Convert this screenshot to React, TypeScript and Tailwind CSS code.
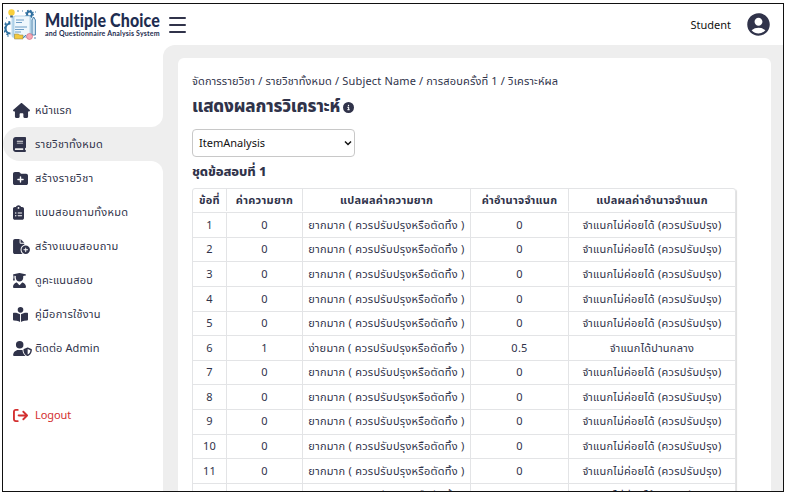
import React from "react";
import {
  FaHouse, FaBook, FaFolderPlus, FaClipboardList, FaFileCirclePlus, FaUserGraduate,
  FaBookOpenReader, FaUserShield, FaArrowRightFromBracket, FaCircleInfo,
} from "react-icons/fa6";
import { MdAccountCircle } from "react-icons/md";
import type { IconType } from "react-icons";

type Item = { icon: IconType; label: string; text: string; size: string };

const below: Item[] = [
  { icon: FaFolderPlus, label: "สร้างรายวิชา", text: "tracking-[0.42px]", size: "size-[15px]" },
  { icon: FaClipboardList, label: "แบบสอบถามทั้งหมด", text: "tracking-[0.3px]", size: "w-[11px] h-[15px]" },
  { icon: FaFileCirclePlus, label: "สร้างแบบสอบถาม", text: "tracking-[0.4px]", size: "w-[17px] h-[15px]" },
  { icon: FaUserGraduate, label: "ดูคะแนนสอบ", text: "tracking-[0.22px]", size: "w-[13px] h-[15px]" },
  { icon: FaBookOpenReader, label: "คู่มือการใช้งาน", text: "tracking-[0.3px]", size: "size-[15px]" },
  { icon: FaUserShield, label: "ติดต่อ Admin", text: "tracking-[0.1px]", size: "w-[19px] h-[15px]" },
];

function MenuItem({ icon: Icon, label, text, size }: Item) {
  return (
    <div className="flex h-[34px] items-center pl-[10px]">
      <span className="flex w-[22px] shrink-0">
        <Icon className={`${size} shrink-0 text-[#30334a]`} />
      </span>
      <span className={`whitespace-nowrap ${text}`}>{label}</span>
    </div>
  );
}

function Logo() {
  return (
    <svg viewBox="0 0 34 34" className="size-[34px] shrink-0" fill="none">
      <path d="M6.500 15.500a5 5 0 000 10" stroke="#2f6f9f" strokeWidth="2.200" />
      <path d="M6.200 14a6.500 6.500 0 000 13" stroke="#2f6f9f" strokeWidth="1.800" strokeDasharray="2 2" />
      <circle cx="25.500" cy="6" r="2.500" stroke="#2f6f9f" strokeWidth="2" />
      <circle cx="25.500" cy="6" r="3.800" stroke="#2f6f9f" strokeWidth="1.200" strokeDasharray="1.500 1.500" />
      <rect x="7.500" y="8" width="20" height="22" rx="3" fill="#b9d7ec" />
      <rect x="10" y="8" width="16" height="20" rx="1" fill="#eff7fc" stroke="#9cc4e0" strokeWidth=".7" />
      <path d="M12 12h8M12 14.500h6M11 19h12M11 21.500h9M11 24h6" stroke="#6c9cc4" strokeWidth="1" />
      <path d="M28 12l1.700-3 1.700 3v15H28z" fill="#d7e9f5" stroke="#3a77a5" strokeWidth=".9" />
      <circle cx="7.500" cy="4.500" r="3.200" fill="#f8cf3c" />
      <path d="M6.200 7.500h2.600v2H6.200z" fill="#38618a" />
      <path d="M10.500 26h4l1 1h3.500v4h-8.500z" fill="#f3c93f" stroke="#8a7840" strokeWidth=".5" />
      <circle cx="25.500" cy="28.500" r="3" fill="#f4a9b5" stroke="#cf6279" strokeWidth=".6" />
      <path d="M19 30l3-3M2 10h1M13 3h2M31 4h1M3 28h2M30 30h2M1 15h1M18 3h1" stroke="#4c86b0" strokeWidth="1" />
    </svg>
  );
}

const low = ["0", "ยากมาก ( ควรปรับปรุงหรือตัดทิ้ง )", "0", "จำแนกไม่ค่อยได้ (ควรปรับปรุง)"];
const mid = ["1", "ง่ายมาก ( ควรปรับปรุงหรือตัดทิ้ง )", "0.5", "จำแนกได้ปานกลาง"];
const rows = Array.from({ length: 12 }, (_, i) => [String(i + 1), ...(i === 5 ? mid : low)]);
const heads = ["ข้อที่", "ค่าความยาก", "แปลผลค่าความยาก", "ค่าอำนาจจำแนก", "แปลผลค่าอำนาจจำแนก"];

function Row({ cells, head }: { cells: string[]; head?: boolean }) {
  return (
    <div className={`grid grid-cols-[34px_76px_168px_98px_166px] border-b border-[#e3e4e6] ${head ? "h-[24.2px] pb-px font-bold tracking-[0.25px]" : "h-[24.6px] tracking-[0.26px]"}`}>
      {cells.map((c, i) => (
        <div key={i} className="flex items-center justify-center border-r border-[#e3e4e6] whitespace-nowrap last:border-r-0">
          {c}
        </div>
      ))}
    </div>
  );
}

export default function App() {
  return (
    <div className="h-[495px] w-[787px] overflow-hidden bg-white pt-[3px] pl-[2px] font-['Noto_Sans','Noto_Sans_Thai',sans-serif] text-[11px] text-[#30334a]">
      <div className="flex h-[489px] w-[782px] flex-col overflow-hidden border border-[#111] bg-white">
        <header className="flex h-[41px] shrink-0 items-center">
          <div className="flex items-center pl-px">
            <Logo />
            <div className="ml-[7px] w-[116px] whitespace-nowrap text-[#1e2d50]">
              <div className="origin-bottom scale-y-[1.12] font-['Lato',sans-serif] text-[16px] leading-[17px] font-black tracking-[0.12px]">Multiple Choice</div>
              <div className="font-['Lato',sans-serif] text-[7px] leading-[8px] font-bold tracking-[0.18px]">and Questionnaire Analysis System</div>
            </div>
          </div>
          <div className="ml-[8px] flex w-[17px] flex-col gap-[5px]">
            <span className="h-[2px] rounded bg-[#30334a]" />
            <span className="h-[2px] rounded bg-[#30334a]" />
            <span className="h-[2px] rounded bg-[#30334a]" />
          </div>
          <div className="mr-[11px] ml-auto flex items-center gap-[14px] text-[#111]">
            <span className="pt-px">Student</span>
            <MdAccountCircle className="size-[27px] text-[#30334a]" />
          </div>
        </header>
        <div className="flex min-h-0 flex-1">
          <nav className="flex w-[160px] shrink-0 flex-col bg-[#eee]">
            <div className="h-[82px] rounded-br-[12px] bg-white pt-[48px]">
              <MenuItem icon={FaHouse} label="หน้าแรก" text="tracking-[0.15px]" size="w-[17px] h-[15px]" />
            </div>
            <div className="bg-white">
              <div className="rounded-l-[17px] bg-[#eee]">
                <MenuItem icon={FaBook} label="รายวิชาทั้งหมด" text="tracking-[0.3px]" size="w-[13px] h-[15px]" />
              </div>
            </div>
            <div className="flex-1 rounded-tr-[12px] bg-white">
              {below.map((m) => <MenuItem key={m.label} {...m} />)}
              <div className="mt-[34px] flex h-[34px] items-center pb-px pl-[10px] tracking-[-0.1px] text-[#d32f2f]">
                <FaArrowRightFromBracket className="mr-[7px] size-[15px]" />
                Logout
              </div>
            </div>
          </nav>
          <div className="flex flex-1 bg-white">
            <div className="flex flex-1 rounded-tl-[12px] bg-[#eee] pt-[13px] pr-[12px] pl-[15px]">
              <main className="flex-1 rounded-t-[6px] bg-white pl-[14px]">
                <div className="mt-[15px] h-[16px] leading-[16px] tracking-[0.16px] whitespace-nowrap">
                  จัดการรายวิชา / รายวิชาทั้งหมด / Subject Name / การสอบครั้งที่ 1 / วิเคราะห์ผล
                </div>
                <div className="mt-[4px] flex h-[26px] items-center gap-[3px] text-[17px] font-extrabold whitespace-nowrap">
                  <h1 className="tracking-[-0.18px]">แสดงผลการวิเคราะห์</h1>
                  <FaCircleInfo className="mt-[3px] size-[11px]" />
                </div>
                <div className="mt-[10px] flex h-[28px] w-[163px] items-center justify-between rounded-[4px] border border-[#c8c8c8] pr-[2px] pl-[6px] text-[#111]">
                  <span>ItemAnalysis</span>
                  <svg viewBox="0 0 8 8" className="size-[8px]" fill="none"><path d="M1 2.500l3 3 3-3" stroke="#111" strokeWidth="1.500" /></svg>
                </div>
                <h2 className="mt-[4px] h-[20px] text-[13px] leading-[20px] font-extrabold tracking-[-0.1px]">ชุดข้อสอบที่ 1</h2>
                <div className="mt-[7px] w-[544px] rounded-t-[3px] border border-[#e3e4e6] shadow-[1px_1px_1px_#ddd]">
                  <Row cells={heads} head />
                  {rows.map((r) => <Row key={r[0]} cells={r} />)}
                </div>
              </main>
            </div>
          </div>
        </div>
      </div>
    </div>
  );
}
